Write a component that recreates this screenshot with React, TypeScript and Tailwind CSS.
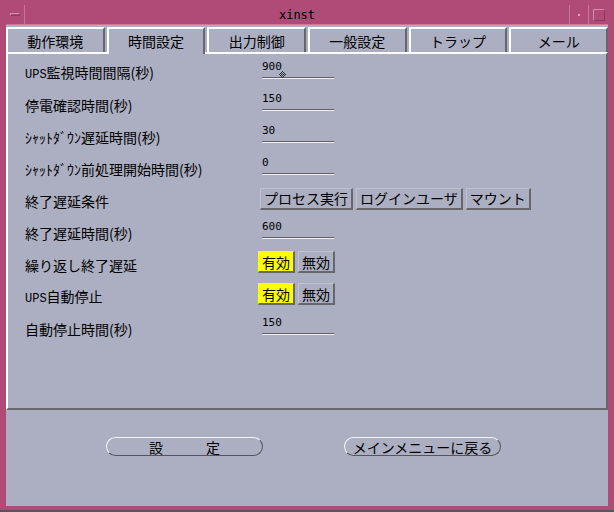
import React from 'react';

type Row =
  | { label: React.ReactNode; kind: 'field'; value: string; caret?: boolean }
  | { label: React.ReactNode; kind: 'buttons'; items: string[] }
  | { label: React.ReactNode; kind: 'toggle' };

const ups = <span className="font-['Liberation_Mono',monospace] text-[12px]">UPS</span>;

const rows: Row[] = [
  { label: <>{ups}監視時間間隔(秒)</>, kind: 'field', value: '900', caret: true },
  { label: '停電確認時間(秒)', kind: 'field', value: '150' },
  { label: 'ｼｬｯﾄﾀﾞｳﾝ遅延時間(秒)', kind: 'field', value: '30' },
  { label: 'ｼｬｯﾄﾀﾞｳﾝ前処理開始時間(秒)', kind: 'field', value: '0' },
  { label: '終了遅延条件', kind: 'buttons', items: ['プロセス実行', 'ログインユーザ', 'マウント'] },
  { label: '終了遅延時間(秒)', kind: 'field', value: '600' },
  { label: '繰り返し終了遅延', kind: 'toggle' },
  { label: <>{ups}自動停止</>, kind: 'toggle' },
  { label: '自動停止時間(秒)', kind: 'field', value: '150' },
];

const tabs = ['動作環境', '時間設定', '出力制御', '一般設定', 'トラップ', 'メール'];

// dithered diamond text cursor
const Caret = () => {
  const dots: [number, number][] = [];
  for (let y = 0; y < 7; y++) {
    for (let x = 0; x < 7; x++) {
      if (Math.abs(x - 3) + Math.abs(y - 3) <= 3 && (x + y) % 2 === 1) dots.push([x, y]);
    }
  }
  return (
    <svg className="absolute left-[17px] top-[10px]" width="7" height="7" viewBox="0 0 7 7">
      {dots.map(([x, y]) => (
        <rect key={`${x}-${y}`} x={x} y={y} width="1" height="1" fill="#2a2a2a" />
      ))}
    </svg>
  );
};

const Field = ({ value, caret }: { value: string; caret?: boolean }) => (
  <div className="ml-[4px] flex w-[72px] flex-col pb-[6px]">
    <div className="relative h-[12px] font-['DejaVu_Sans_Mono',monospace] text-[11px] leading-[12px] text-black">
      {value}
      {caret && <Caret />}
    </div>
    <div className="mt-[4px] h-[2px] border-t border-b border-t-[#606068] border-b-[#eeeef4]" />
  </div>
);

const PushButton = ({ children, on }: { children: React.ReactNode; on?: boolean }) => (
  <div
    className={
      'flex h-[22px] items-center border-t border-l border-r-2 border-b-2 border-t-[#bfc1cf] border-l-[#bfc1cf] border-r-[#66666c] border-b-[#66666c] px-[3px] text-[14px] leading-none text-black ' +
      (on ? 'bg-[#ffff00] border-t-[#ffff00] border-l-[#ffff00]' : '')
    }
  >
    {children}
  </div>
);

export default function App() {
  return (
    <div className="flex h-[512px] w-[614px] flex-col border-b-2 border-b-[#55555a] bg-[#b04a77] px-[6px] pt-[5px] pb-[4px] font-['Noto_Sans_CJK_JP',sans-serif] text-black">
      {/* title bar */}
      <div className="flex h-[20px] border-b border-b-[#c9789b]">
        <div className="flex w-[19px] items-center justify-center border-r border-r-[#c9789b]">
          <div className="h-[3px] w-[10px] border-t border-l border-t-[#d68cab] border-l-[#d68cab] border-b border-r border-b-[#8c3a5e] border-r-[#8c3a5e]" />
        </div>
        <div className="flex flex-1 items-center justify-center font-['DejaVu_Sans_Mono',monospace] text-[12px] leading-none">
          xinst
        </div>
        <div className="flex w-[19px] items-center justify-center border-l border-l-[#c9789b]">
          <div className="h-[2px] w-[2px] bg-[#e0a8c0]" />
        </div>
        <div className="flex w-[20px] items-center justify-center border-l border-l-[#c9789b]">
          <div className="h-[12px] w-[12px] border border-t-[#d68cab] border-l-[#d68cab] border-b-[#8c3a5e] border-r-[#8c3a5e]" />
        </div>
      </div>

      {/* client area */}
      <div className="flex flex-1 flex-col bg-[#acafc2]">
        <div className="mt-[2px] flex h-[25px] gap-[2px]">
          {tabs.map((t, i) => (
            <div
              key={t}
              className={
                'flex flex-1 items-center justify-center border-t-2 border-l-2 border-r-2 border-t-white border-l-white border-r-[#66666c] bg-[#acafc2] text-[14px] leading-none ' +
                (i === 1 ? 'relative z-10 h-[27px] pb-[2px]' : 'h-[25px]')
              }
            >
              {t}
            </div>
          ))}
        </div>

        <div className="flex h-[358px] flex-col border-2 border-t-white border-l-white border-r-[#66666c] border-b-[#66666c] pt-[3px] pl-[17px]">
          {rows.map((r, i) => (
            <div key={i} className="flex h-[32px] items-center">
              <div className="w-[233px] text-[14px] leading-none">{r.label}</div>
              {r.kind === 'field' && <Field value={r.value} caret={r.caret} />}
              {r.kind === 'buttons' && (
                <div className="mb-[5px] ml-[2px] flex gap-[3px]">
                  {r.items.map((b) => (
                    <PushButton key={b}>{b}</PushButton>
                  ))}
                </div>
              )}
              {r.kind === 'toggle' && (
                <div className="mb-[6px] flex gap-[3px]">
                  <PushButton on>有効</PushButton>
                  <PushButton>無効</PushButton>
                </div>
              )}
            </div>
          ))}
        </div>

        <div className="flex gap-[81px] pt-[27px] pl-[100px]">
          <div className="flex h-[19px] w-[157px] items-center justify-center gap-[43px] rounded-full border border-t-[#f4f4f8] border-l-[#f4f4f8] border-b-[#55555c] border-r-[#55555c] text-[14px] leading-none">
            <span>設</span>
            <span>定</span>
          </div>
          <div className="flex h-[19px] w-[157px] items-center justify-center rounded-full border border-t-[#f4f4f8] border-l-[#f4f4f8] border-b-[#55555c] border-r-[#55555c] text-[14px] leading-none">
            メインメニューに戻る
          </div>
        </div>
      </div>
    </div>
  );
}
